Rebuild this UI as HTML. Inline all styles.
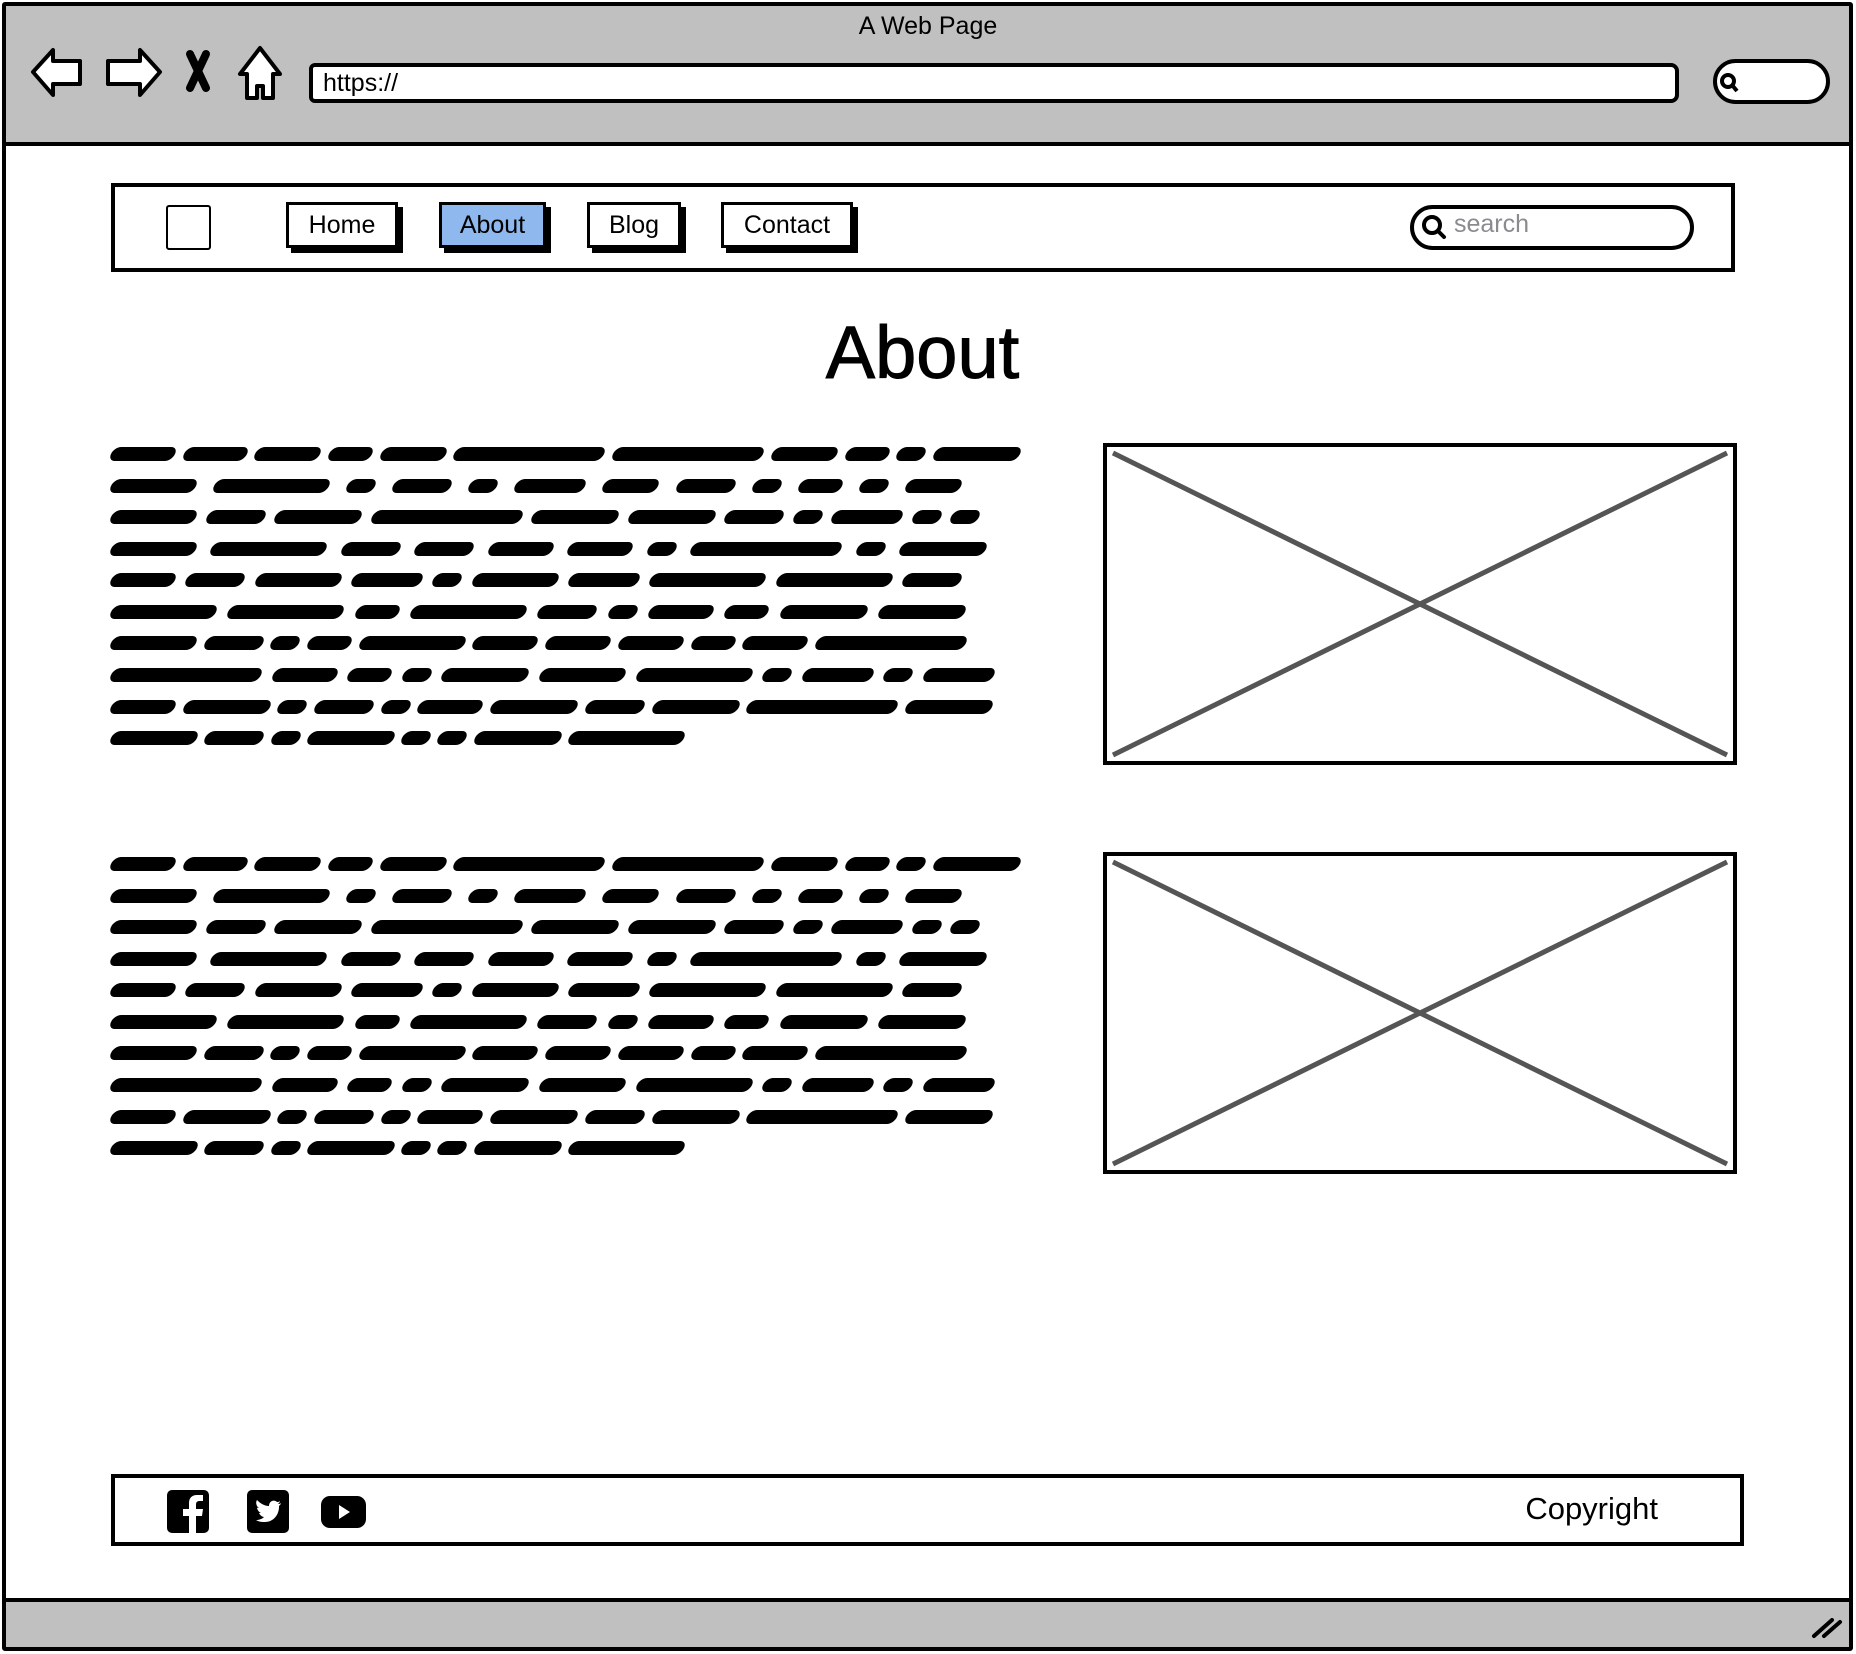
<!DOCTYPE html>
<html><head><meta charset="utf-8"><style>
*{margin:0;padding:0;box-sizing:border-box}
body{width:1856px;height:1654px;position:relative;background:#fff;font-family:"Liberation Sans",sans-serif;overflow:hidden}
.a{position:absolute}
.frame{left:2px;top:2px;width:1851px;height:1649px;border:4px solid #000;border-radius:3px}
.topbar{left:4px;top:4px;width:1847px;height:142px;background:#c0c0c0;border-bottom:4px solid #000}
.botbar{left:4px;top:1598px;width:1847px;height:51px;background:#c0c0c0;border-top:4px solid #000}
.btn{border:3px solid #000;background:#fff;font-size:25px;display:flex;align-items:center;justify-content:center;box-shadow:5px 5px 0 #000;height:46px}
.line{position:absolute;left:111px;display:flex;justify-content:space-between;height:14px}
.line span{display:block;height:14px;background:#000;border-radius:7px;transform:skewX(-25deg)}
.img{border:4px solid #000;background:#fff}
</style></head><body>
<div class="a topbar"></div>
<div class="a botbar"></div>
<div class="a frame"></div>
<div class="a" style="left:0;width:1856px;top:12px;text-align:center;font-size:25px">A Web Page</div>
<svg class="a" style="left:28px;top:44px" width="260" height="60" viewBox="0 0 260 60">
<path d="M5 28 L25 6 L25 17 L52 17 L52 40 L25 40 L25 51 Z" fill="#fff" stroke="#000" stroke-width="4" stroke-linejoin="round"/>
<path d="M132 28 L112 6 L112 17 L80 17 L80 40 L112 40 L112 51 Z" fill="#fff" stroke="#000" stroke-width="4" stroke-linejoin="round"/>
<path d="M162 10 L178 44 M178 10 L162 44" stroke="#000" stroke-width="8" stroke-linecap="round"/>
<path d="M232 4 L212 30 L219 30 L219 54 L229 54 L229 42 L235 42 L235 54 L245 54 L245 30 L252 30 Z" fill="#fff" stroke="#000" stroke-width="4" stroke-linejoin="round"/>
</svg>
<div class="a" style="left:309px;top:63px;width:1370px;height:40px;background:#fff;border:4px solid #000;border-radius:6px 8px 8px 6px;font-size:25px;padding:2px 10px">https://</div>
<div class="a" style="left:1713px;top:59px;width:117px;height:45px;background:#fff;border:4px solid #000;border-radius:24px"></div>
<svg class="a" style="left:1718px;top:71px" width="24" height="24"><circle cx="10" cy="10" r="6" fill="none" stroke="#000" stroke-width="4"/><path d="M14 14 L19 20" stroke="#000" stroke-width="4"/></svg>

<div class="a" style="left:111px;top:183px;width:1624px;height:89px;border:4px solid #000"></div>
<div class="a" style="left:166px;top:205px;width:45px;height:45px;border:2px solid #000;border-radius:3px"></div>
<div class="a btn" style="left:286px;top:202px;width:112px">Home</div>
<div class="a btn" style="left:439px;top:202px;width:107px;background:#8fb8ee">About</div>
<div class="a btn" style="left:587px;top:202px;width:94px">Blog</div>
<div class="a btn" style="left:721px;top:202px;width:132px">Contact</div>
<div class="a" style="left:1410px;top:205px;width:284px;height:45px;border:4px solid #000;border-radius:23px"></div>
<svg class="a" style="left:1420px;top:213px" width="28" height="28"><circle cx="12" cy="12" r="8" fill="none" stroke="#000" stroke-width="4"/><path d="M18 18 L24 24" stroke="#000" stroke-width="4" stroke-linecap="round"/></svg>
<div class="a" style="left:1454px;top:210px;font-size:25px;color:#8a8a90">search</div>

<div class="a" style="left:0;width:1845px;top:310px;text-align:center;font-size:74px;-webkit-text-stroke:1px #000">About</div>

<div class="a img" style="left:1103px;top:443px;width:634px;height:322px"></div>
<div class="a img" style="left:1103px;top:852px;width:634px;height:322px"></div>
<svg class="a" style="left:1103px;top:443px" width="634" height="322"><path d="M10 10 L624 312 M624 10 L10 312" stroke="#555" stroke-width="5"/></svg>
<svg class="a" style="left:1103px;top:852px" width="634" height="322"><path d="M10 10 L624 312 M624 10 L10 312" stroke="#555" stroke-width="5"/></svg>

<div style="position:absolute;left:0;top:0">
<div class="line" style="top:447px;width:909px"><span style="width:64px"></span><span style="width:63px"></span><span style="width:65px"></span><span style="width:43px"></span><span style="width:65px"></span><span style="width:150px"></span><span style="width:150px"></span><span style="width:65px"></span><span style="width:43px"></span><span style="width:28px"></span><span style="width:86px"></span></div>
<div class="line" style="top:479px;width:850px"><span style="width:85px"></span><span style="width:115px"></span><span style="width:28px"></span><span style="width:58px"></span><span style="width:28px"></span><span style="width:70px"></span><span style="width:55px"></span><span style="width:58px"></span><span style="width:28px"></span><span style="width:43px"></span><span style="width:28px"></span><span style="width:55px"></span></div>
<div class="line" style="top:510px;width:868px"><span style="width:85px"></span><span style="width:58px"></span><span style="width:86px"></span><span style="width:150px"></span><span style="width:86px"></span><span style="width:86px"></span><span style="width:58px"></span><span style="width:28px"></span><span style="width:70px"></span><span style="width:28px"></span><span style="width:28px"></span></div>
<div class="line" style="top:542px;width:875px"><span style="width:85px"></span><span style="width:115px"></span><span style="width:58px"></span><span style="width:58px"></span><span style="width:64px"></span><span style="width:64px"></span><span style="width:28px"></span><span style="width:150px"></span><span style="width:28px"></span><span style="width:86px"></span></div>
<div class="line" style="top:573px;width:850px"><span style="width:64px"></span><span style="width:58px"></span><span style="width:85px"></span><span style="width:70px"></span><span style="width:28px"></span><span style="width:85px"></span><span style="width:70px"></span><span style="width:115px"></span><span style="width:115px"></span><span style="width:58px"></span></div>
<div class="line" style="top:605px;width:854px"><span style="width:105px"></span><span style="width:115px"></span><span style="width:43px"></span><span style="width:115px"></span><span style="width:58px"></span><span style="width:28px"></span><span style="width:64px"></span><span style="width:43px"></span><span style="width:86px"></span><span style="width:86px"></span></div>
<div class="line" style="top:636px;width:855px"><span style="width:85px"></span><span style="width:58px"></span><span style="width:28px"></span><span style="width:43px"></span><span style="width:105px"></span><span style="width:64px"></span><span style="width:64px"></span><span style="width:64px"></span><span style="width:43px"></span><span style="width:64px"></span><span style="width:150px"></span></div>
<div class="line" style="top:668px;width:883px"><span style="width:150px"></span><span style="width:64px"></span><span style="width:43px"></span><span style="width:28px"></span><span style="width:86px"></span><span style="width:85px"></span><span style="width:115px"></span><span style="width:28px"></span><span style="width:70px"></span><span style="width:28px"></span><span style="width:70px"></span></div>
<div class="line" style="top:700px;width:881px"><span style="width:64px"></span><span style="width:86px"></span><span style="width:28px"></span><span style="width:58px"></span><span style="width:28px"></span><span style="width:64px"></span><span style="width:86px"></span><span style="width:58px"></span><span style="width:86px"></span><span style="width:150px"></span><span style="width:86px"></span></div>
<div class="line" style="top:731px;width:573px"><span style="width:86px"></span><span style="width:58px"></span><span style="width:28px"></span><span style="width:86px"></span><span style="width:28px"></span><span style="width:28px"></span><span style="width:86px"></span><span style="width:115px"></span></div>
</div>

<div style="position:absolute;left:0;top:410px">
<div class="line" style="top:447px;width:909px"><span style="width:64px"></span><span style="width:63px"></span><span style="width:65px"></span><span style="width:43px"></span><span style="width:65px"></span><span style="width:150px"></span><span style="width:150px"></span><span style="width:65px"></span><span style="width:43px"></span><span style="width:28px"></span><span style="width:86px"></span></div>
<div class="line" style="top:479px;width:850px"><span style="width:85px"></span><span style="width:115px"></span><span style="width:28px"></span><span style="width:58px"></span><span style="width:28px"></span><span style="width:70px"></span><span style="width:55px"></span><span style="width:58px"></span><span style="width:28px"></span><span style="width:43px"></span><span style="width:28px"></span><span style="width:55px"></span></div>
<div class="line" style="top:510px;width:868px"><span style="width:85px"></span><span style="width:58px"></span><span style="width:86px"></span><span style="width:150px"></span><span style="width:86px"></span><span style="width:86px"></span><span style="width:58px"></span><span style="width:28px"></span><span style="width:70px"></span><span style="width:28px"></span><span style="width:28px"></span></div>
<div class="line" style="top:542px;width:875px"><span style="width:85px"></span><span style="width:115px"></span><span style="width:58px"></span><span style="width:58px"></span><span style="width:64px"></span><span style="width:64px"></span><span style="width:28px"></span><span style="width:150px"></span><span style="width:28px"></span><span style="width:86px"></span></div>
<div class="line" style="top:573px;width:850px"><span style="width:64px"></span><span style="width:58px"></span><span style="width:85px"></span><span style="width:70px"></span><span style="width:28px"></span><span style="width:85px"></span><span style="width:70px"></span><span style="width:115px"></span><span style="width:115px"></span><span style="width:58px"></span></div>
<div class="line" style="top:605px;width:854px"><span style="width:105px"></span><span style="width:115px"></span><span style="width:43px"></span><span style="width:115px"></span><span style="width:58px"></span><span style="width:28px"></span><span style="width:64px"></span><span style="width:43px"></span><span style="width:86px"></span><span style="width:86px"></span></div>
<div class="line" style="top:636px;width:855px"><span style="width:85px"></span><span style="width:58px"></span><span style="width:28px"></span><span style="width:43px"></span><span style="width:105px"></span><span style="width:64px"></span><span style="width:64px"></span><span style="width:64px"></span><span style="width:43px"></span><span style="width:64px"></span><span style="width:150px"></span></div>
<div class="line" style="top:668px;width:883px"><span style="width:150px"></span><span style="width:64px"></span><span style="width:43px"></span><span style="width:28px"></span><span style="width:86px"></span><span style="width:85px"></span><span style="width:115px"></span><span style="width:28px"></span><span style="width:70px"></span><span style="width:28px"></span><span style="width:70px"></span></div>
<div class="line" style="top:700px;width:881px"><span style="width:64px"></span><span style="width:86px"></span><span style="width:28px"></span><span style="width:58px"></span><span style="width:28px"></span><span style="width:64px"></span><span style="width:86px"></span><span style="width:58px"></span><span style="width:86px"></span><span style="width:150px"></span><span style="width:86px"></span></div>
<div class="line" style="top:731px;width:573px"><span style="width:86px"></span><span style="width:58px"></span><span style="width:28px"></span><span style="width:86px"></span><span style="width:28px"></span><span style="width:28px"></span><span style="width:86px"></span><span style="width:115px"></span></div>
</div>

<div class="a" style="left:111px;top:1474px;width:1633px;height:72px;border:4px solid #000"></div>
<svg class="a" style="left:167px;top:1490px" width="42" height="43" viewBox="0 0 42 43"><rect width="42" height="43" rx="5" fill="#000"/><path d="M29 43 V26 H35 L36 19 H29 V15 C29 12 30 11 33 11 H36 V5 C34 5 32 5 30 5 C25 5 22 8 22 13 V19 H16 V26 H22 V43 Z" fill="#fff"/></svg>
<svg class="a" style="left:247px;top:1490px" width="42" height="43" viewBox="0 0 42 43"><rect width="42" height="43" rx="5" fill="#000"/><path d="M34 13 C33 14 32 14 31 14 C32 13 33 12 33 11 C32 12 31 12 30 12 C27 9 22 11 22 16 C17 16 13 13 10 10 C8 13 10 17 12 18 C11 18 10 18 10 17 C10 20 12 22 14 23 C13 23 12 23 12 23 C13 25 15 27 17 27 C15 29 12 30 9 30 C12 32 15 32 18 32 C27 32 32 24 32 17 V16 C33 15 34 14 34 13 Z" fill="#fff"/></svg>
<svg class="a" style="left:321px;top:1496px" width="45" height="32" viewBox="0 0 45 32"><rect width="45" height="32" rx="9" fill="#000"/><path d="M18 9 L29 16 L18 23 Z" fill="#fff"/></svg>
<div class="a" style="left:1480px;top:1491px;width:178px;text-align:right;font-size:31px">Copyright</div>
<svg class="a" style="left:1810px;top:1612px" width="36" height="28"><path d="M4 24 L22 8 M14 24 L30 10" stroke="#000" stroke-width="4" stroke-linecap="round"/></svg>
</body></html>
